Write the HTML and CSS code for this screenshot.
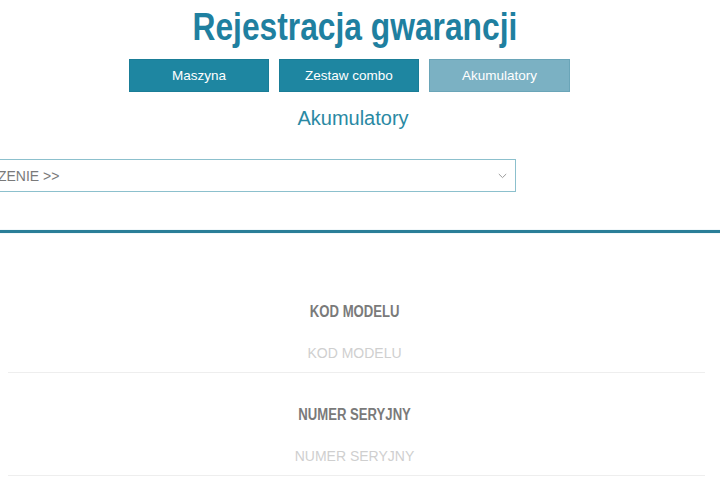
FILE: index.html
```html
<!DOCTYPE html>
<html lang="pl">
<head>
<meta charset="utf-8">
<title>Rejestracja gwarancji</title>
<link rel="stylesheet" href="styles.css">
</head>
<body>
<div class="page">
  <header class="top">
    <h1 class="title"><span class="narrow">Rejestracja gwarancji</span></h1>
    <nav class="tabs">
      <a class="tab">Maszyna</a>
      <a class="tab">Zestaw combo</a>
      <a class="tab tab-active">Akumulatory</a>
    </nav>
    <h2 class="subtitle">Akumulatory</h2>
    <div class="select">
      <span class="select-text">WYBIERZ URZĄDZENIE &gt;&gt;</span>
      <svg class="chevron" width="9" height="6" viewBox="0 0 9 6"><path d="M0.8 1 L4.5 4.6 L8.2 1" fill="none" stroke="#9a9a9a" stroke-width="1"/></svg>
    </div>
  </header>
  <hr class="divider">
  <form class="form">
    <div class="field">
      <div class="label"><span class="narrow">KOD MODELU</span></div>
      <div class="input">KOD MODELU</div>
    </div>
    <div class="field">
      <div class="label"><span class="narrow">NUMER SERYJNY</span></div>
      <div class="input">NUMER SERYJNY</div>
    </div>
  </form>
</div>
</body>
</html>
```

FILE: styles.css
```css
html, body {
  margin: 0;
  padding: 0;
  background: #ffffff;
  overflow: hidden;
}

.page {
  width: 713px;
  font-family: "Liberation Sans", Arial, sans-serif;
}

.top {
  display: flex;
  flex-direction: column;
  align-items: center;
}

.narrow {
  display: inline-block;
  transform: scaleX(0.82);
  transform-origin: center;
}

.title {
  margin: 5px 0 0;
  font-weight: bold;
  font-size: 38.5px;
  line-height: 44px;
  color: #1f80a0;
  padding-right: 4px;
}

.title .narrow {
  transform: scaleX(0.825);
}

.tabs {
  display: flex;
  gap: 10px;
  margin-top: 10px;
  padding-right: 14px;
}

.tab {
  box-sizing: border-box;
  width: 140px;
  height: 33px;
  display: flex;
  align-items: center;
  justify-content: center;
  background: #1e86a1;
  color: #ffffff;
  font-size: 13.5px;
  border: 1px solid #1a7d97;
}

.tab-active {
  background: #7bb1c3;
  border-color: #6aa5b8;
  width: 141px;
}

.subtitle {
  margin: 14px 0 0;
  font-weight: normal;
  font-size: 20px;
  line-height: 24px;
  color: #2a89a3;
  padding-right: 7px;
}

.select {
  align-self: flex-start;
  box-sizing: border-box;
  margin-top: 29px;
  margin-left: -132px;
  width: 648px;
  height: 33px;
  border: 1px solid #8cc0cd;
  display: flex;
  align-items: center;
  justify-content: space-between;
  padding: 0 8px 0 13px;
  font-size: 14px;
  color: #7a7a7a;
}

.chevron {
  display: block;
}

.divider {
  margin: 38px 0 0;
  width: 720px;
  height: 3px;
  border: 0;
  background: #2a7e98;
  box-shadow: 0 0 1px #7fb5c6;
}

.form {
  padding: 69px 8px 0;
}

.field {
  display: flex;
  flex-direction: column;
  align-items: center;
}

.field + .field {
  margin-top: 32px;
}

.label {
  font-weight: bold;
  font-size: 16px;
  line-height: 20px;
  color: #7a7a7a;
  margin-bottom: 21px;
  padding-right: 4px;
}

.input {
  align-self: stretch;
  text-align: center;
  font-size: 14px;
  line-height: 20px;
  color: #cfcfcf;
  padding-bottom: 9px;
  padding-right: 4px;
  border-bottom: 1px solid #eeeeee;
}
```
